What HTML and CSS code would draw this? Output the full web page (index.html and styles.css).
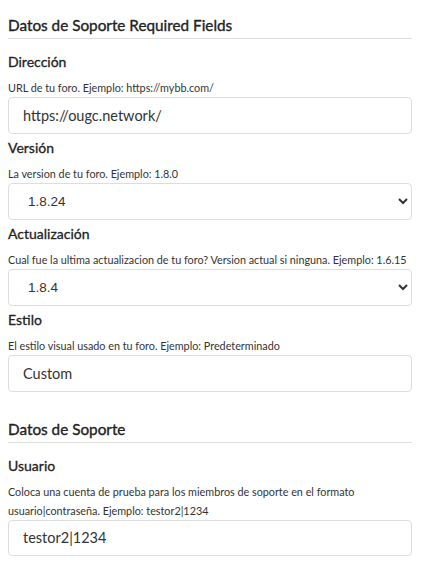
FILE: index.html
```html
<!DOCTYPE html>
<html lang="es">
<head>
<meta charset="utf-8">
<title>Datos de Soporte</title>
<link rel="stylesheet" href="styles.css">
</head>
<body>
<form class="form">
  <section class="section">
    <h2 class="section-title">Datos de Soporte Required Fields</h2>
    <div class="field">
      <label class="field-label" for="f1">Dirección</label>
      <div class="field-desc">URL de tu foro. Ejemplo: https://mybb.com/</div>
      <input class="field-input" id="f1" type="text" value="https://ougc.network/">
    </div>
    <div class="field">
      <label class="field-label" for="f2">Versión</label>
      <div class="field-desc">La version de tu foro. Ejemplo: 1.8.0</div>
      <select class="field-select" id="f2"><option>1.8.24</option></select>
    </div>
    <div class="field">
      <label class="field-label" for="f3">Actualización</label>
      <div class="field-desc">Cual fue la ultima actualizacion de tu foro? Version actual si ninguna. Ejemplo: 1.6.15</div>
      <select class="field-select" id="f3"><option>1.8.4</option></select>
    </div>
    <div class="field">
      <label class="field-label" for="f4">Estilo</label>
      <div class="field-desc">El estilo visual usado en tu foro. Ejemplo: Predeterminado</div>
      <input class="field-input" id="f4" type="text" value="Custom">
    </div>
  </section>
  <section class="section section-next">
    <h2 class="section-title">Datos de Soporte</h2>
    <div class="field">
      <label class="field-label" for="f5">Usuario</label>
      <div class="field-desc">Coloca una cuenta de prueba para los miembros de soporte en el formato usuario|contraseña. Ejemplo: testor2|1234</div>
      <input class="field-input" id="f5" type="text" value="testor2|1234">
    </div>
  </section>
</form>
</body>
</html>
```
FILE: styles.css
```css
html, body {
  margin: 0;
  padding: 0;
  background: #fff;
}
body {
  padding: 8px 14px 0 8px;
  font-family: Lato, "Open Sans", sans-serif;
  color: #333;
}
.form {
  display: flex;
  flex-direction: column;
}
.section {
  display: flex;
  flex-direction: column;
}
.section-next {
  margin-top: 20px;
}
.section-title {
  margin: 7px 0 8px;
  padding: 0 0 2px;
  font-size: 15.3px;
  line-height: 21px;
  font-weight: 400;
  color: #222;
  border-bottom: 1px solid #ddd;
  -webkit-text-stroke: 0.35px #222;
}
.field {
  display: flex;
  flex-direction: column;
  margin-top: 4.5px;
}
.section-title + .field {
  margin-top: 5px;
}
.field-label {
  font-size: 14px;
  line-height: 20px;
  font-weight: 400;
  color: #222;
  -webkit-text-stroke: 0.3px #222;
  margin-bottom: 6px;
}
.field-desc {
  font-size: 10.8px;
  line-height: 19px;
  color: #333;
}
.field-input,
.field-select {
  box-sizing: border-box;
  width: 100%;
  height: 36.5px;
  margin: 0;
  border: 1px solid #ddd;
  border-radius: 4px;
  background: #fff;
  color: #333;
}
.field-input {
  padding: 0 14px;
  font-family: Lato, sans-serif;
  font-size: 14.5px;
}
.field-select {
  padding: 0 4px 0 15px;
  font-family: "Liberation Sans", Arial, sans-serif;
  font-size: 13.5px;
}
```
